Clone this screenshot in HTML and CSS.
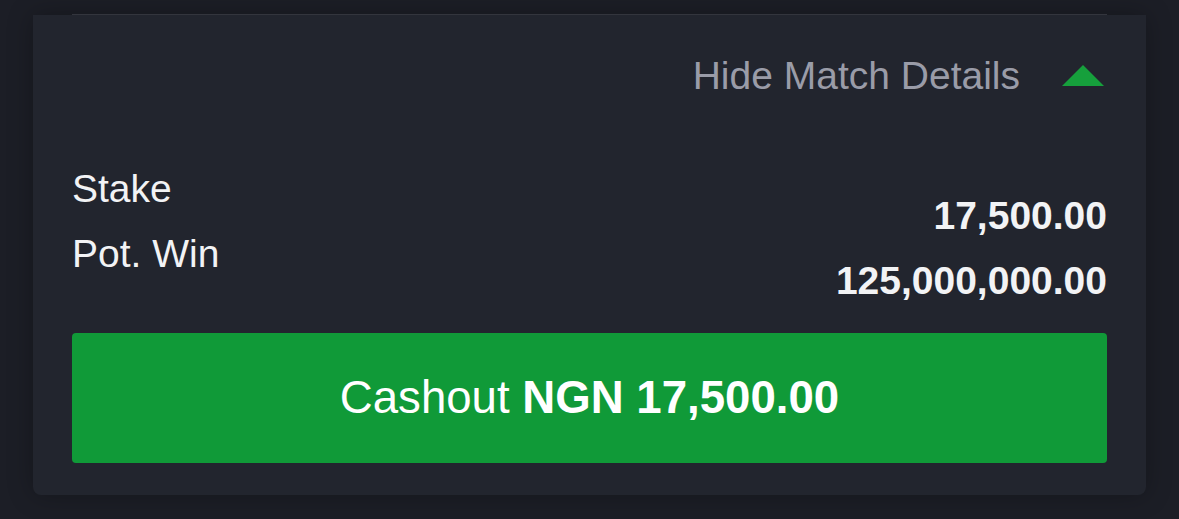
FILE: index.html
```html
<!DOCTYPE html>
<html lang="en">
<head>
<meta charset="utf-8">
<title>Bet details</title>
<link rel="stylesheet" href="styles.css">
</head>
<body>
<div class="page">
  <div class="divider"></div>
  <section class="card">
    <div class="toggle-row">
      <span class="toggle-label">Hide Match Details</span>
      <svg class="caret" width="42" height="21" viewBox="0 0 42 21" aria-hidden="true">
        <polygon points="0,21 21,0 42,21" fill="#16a03c"/>
      </svg>
    </div>
    <div class="summary">
      <div class="labels">
        <div class="label">Stake</div>
        <div class="label">Pot. Win</div>
      </div>
      <div class="values">
        <div class="value">17,500.00</div>
        <div class="value">125,000,000.00</div>
      </div>
    </div>
    <button class="cashout">Cashout <strong>NGN 17,500.00</strong></button>
  </section>
</div>
</body>
</html>
```

FILE: styles.css
```css
* { box-sizing: border-box; }
html, body {
  margin: 0;
  padding: 0;
  background: #1c1e26;
  font-family: "Liberation Sans", Arial, Helvetica, sans-serif;
}
.page {
  width: 1179px;
  height: 519px;
  padding: 14px 33px 0 33px;
  overflow: hidden;
}
.divider {
  height: 1px;
  margin: 0 39px 0 39px;
  background: #3b3e47;
}
.card {
  background: #22252e;
  border-radius: 0 0 8px 8px;
  box-shadow: 0 0 26px rgba(0, 0, 0, 0.28);
  padding: 41px 39px 32px 39px;
  display: flex;
  flex-direction: column;
}
.toggle-row {
  display: flex;
  justify-content: flex-end;
  align-items: center;
  gap: 42px;
  padding-right: 3px;
  height: 39px;
}
.toggle-label {
  font-size: 39px;
  line-height: 39px;
  color: #9a9ca8;
}
.caret { display: block; }
.summary {
  margin-top: 74px;
  display: flex;
  justify-content: space-between;
}
.labels, .values {
  display: flex;
  flex-direction: column;
  gap: 26px;
}
.values { padding-top: 27px; align-items: flex-end; }
.label {
  font-size: 39px;
  line-height: 39px;
  color: #f2f3f5;
}
.value {
  font-size: 39px;
  line-height: 39px;
  font-weight: bold;
  color: #f2f3f5;
}
.cashout {
  margin-top: 33px;
  height: 130px;
  width: 100%;
  border: none;
  border-radius: 4px;
  background: #109a38;
  color: #ffffff;
  font-family: "Liberation Sans", Arial, Helvetica, sans-serif;
  font-size: 45.6px;
  line-height: 130px;
  padding: 0;
  text-align: center;
}
.cashout strong { font-weight: bold; }
```
